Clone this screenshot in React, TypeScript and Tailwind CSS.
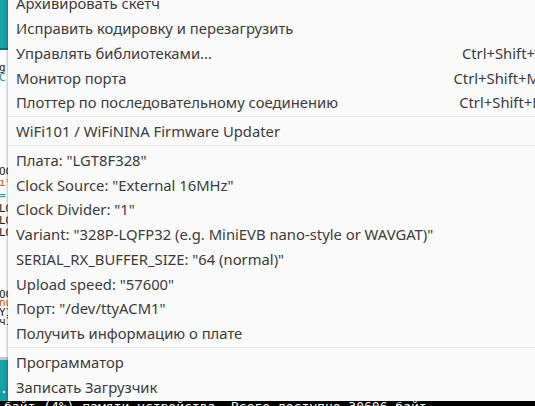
type Entry =
  | { kind: "item"; label: string; shortcut?: string; sub?: boolean }
  | { kind: "sep" }

const entries: Entry[] = [
  { kind: "item", label: "Архивировать скетч" },
  { kind: "item", label: "Исправить кодировку и перезагрузить" },
  { kind: "item", label: "Управлять библиотеками...", shortcut: "Ctrl+Shift+I" },
  { kind: "item", label: "Монитор порта", shortcut: "Ctrl+Shift+M" },
  { kind: "item", label: "Плоттер по последовательному соединению", shortcut: "Ctrl+Shift+L" },
  { kind: "sep" },
  { kind: "item", label: "WiFi101 / WiFiNINA Firmware Updater" },
  { kind: "sep" },
  { kind: "item", label: 'Плата: "LGT8F328"', sub: true },
  { kind: "item", label: 'Clock Source: "External 16MHz"', sub: true },
  { kind: "item", label: 'Clock Divider: "1"', sub: true },
  { kind: "item", label: 'Variant: "328P-LQFP32 (e.g. MiniEVB nano-style or WAVGAT)"', sub: true },
  { kind: "item", label: 'SERIAL_RX_BUFFER_SIZE: "64 (normal)"', sub: true },
  { kind: "item", label: 'Upload speed: "57600"', sub: true },
  { kind: "item", label: 'Порт: "/dev/ttyACM1"', sub: true },
  { kind: "item", label: "Получить информацию о плате" },
  { kind: "sep" },
  { kind: "item", label: "Программатор", sub: true },
  { kind: "item", label: "Записать Загрузчик" },
]

// куски кода, которые торчат слева из-под меню
const codeBits: { top: number; text: string; color: string }[] = [
  { top: 64, text: "g", color: "text-[#222]" },
  { top: 74, text: "C", color: "text-[#00979c]" },
  { top: 168, text: "OC", color: "text-[#222]" },
  { top: 179, text: "ı*", color: "text-[#d35400]" },
  { top: 192, text: "=", color: "text-[#00979c]" },
  { top: 205, text: "LG", color: "text-[#222]" },
  { top: 217, text: "LG", color: "text-[#222]" },
  { top: 229, text: "LG", color: "text-[#222]" },
  { top: 291, text: "OC", color: "text-[#222]" },
  { top: 299, text: "nu", color: "text-[#d35400]" },
  { top: 309, text: "Y1", color: "text-[#222]" },
  { top: 318, text: "ч1", color: "text-[#222]" },
]

function Arrow() {
  return (
    <svg width="5" height="9" viewBox="0 0 5 9" className="shrink-0">
      <path d="M0 0 L5 4.5 L0 9 Z" fill="#5a5a5a" />
    </svg>
  )
}

export default function App() {
  return (
    <div className="relative h-[406px] w-[535px] overflow-hidden bg-white font-['Noto_Sans',sans-serif]">
      {/* IDE за меню */}
      <div className="flex h-full flex-col">
        <div className="h-[48px] bg-[#17a1a5]" />
        <div className="h-[2px] bg-[#0b6f73]" />
        <div className="relative flex-1 bg-[#fdfdfd] font-['DejaVu_Sans_Mono',monospace] text-[11px] leading-[8px]">
          {codeBits.map((b, i) => (
            <div key={i} className={`absolute left-[-1px] ${b.color}`} style={{ top: b.top - 50 }}>
              {b.text}
            </div>
          ))}
        </div>
        <div className="h-[3px] bg-[#c8c8c8]" />
        <div className="relative h-[41px] bg-[#17a1a5]">
          <div className="absolute left-[3px] top-[31px] h-[2px] w-[2px] bg-white" />
        </div>
        <div className="h-[5px] overflow-hidden bg-black pl-[4px] font-['DejaVu_Sans_Mono',monospace] text-[13px] leading-[14px] whitespace-nowrap text-white">
          <div className="mt-[-1px]">байт (4%) памяти устройства. Всего доступно 30606 байт</div>
        </div>
      </div>

      {/* меню Инструменты */}
      <div className="absolute left-[8px] top-[-9px] w-[545px] bg-[#fafafa] pb-[2px] text-[14.8px] text-[#3c3c3c] shadow-[-1px_0_2px_rgba(0,0,0,0.25)]">
        {entries.map((e, i) =>
          e.kind === "sep" ? (
            <div key={i} className="flex h-[4px] items-start pt-[1px]">
              <div className="h-px w-full bg-[#e6e6e6]" />
            </div>
          ) : (
            <div key={i} className="flex h-[24.75px] items-center whitespace-nowrap pl-[8px]">
              <span className="flex-1">{e.label}</span>
              {e.shortcut && <span className="pr-[13px]">{e.shortcut}</span>}
              {e.sub && (
                <span className="mr-[10px] flex items-center">
                  <Arrow />
                </span>
              )}
            </div>
          ),
        )}
      </div>
    </div>
  )
}
